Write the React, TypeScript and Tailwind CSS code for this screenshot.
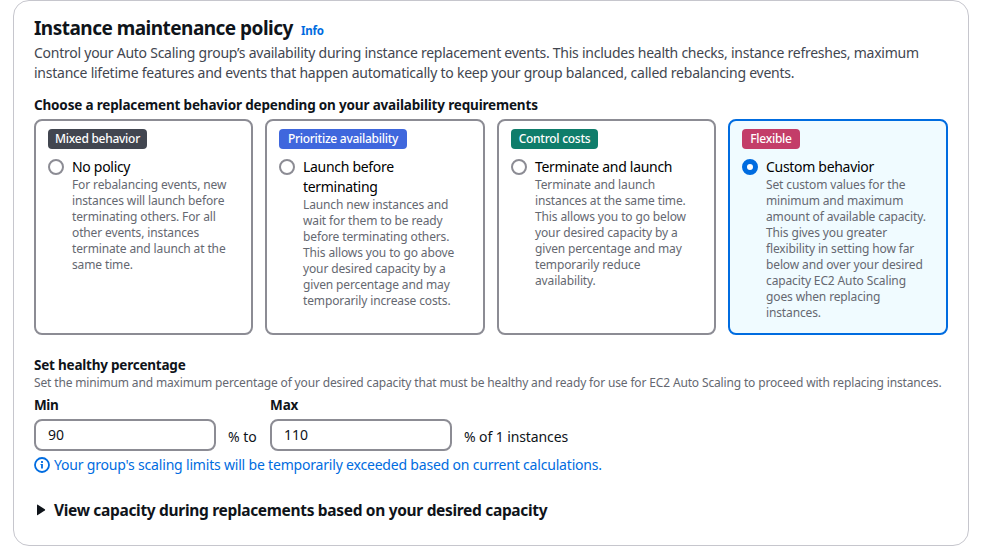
import React from "react";

type Choice = { tag: string; color: string; title: string[]; lines: string[]; width: string; selected?: boolean };

const choices: Choice[] = [
  { tag: "Mixed behavior", color: "w-[99px] bg-[#424650]", title: ["No policy"], width: "w-[219px]", lines: ["For rebalancing events, new", "instances will launch before", "terminating others. For all", "other events, instances", "terminate and launch at the", "same time."] },
  { tag: "Prioritize availability", color: "w-[128px] bg-[#3f67dd]", title: ["Launch before", "terminating"], width: "w-[220px]", lines: ["Launch new instances and", "wait for them to be ready", "before terminating others.", "This allows you to go above", "your desired capacity by a", "given percentage and may", "temporarily increase costs."] },
  { tag: "Control costs", color: "w-[87px] bg-[#0f7d6b]", title: ["Terminate and launch"], width: "w-[219px]", lines: ["Terminate and launch", "instances at the same time.", "This allows you to go below", "your desired capacity by a", "given percentage and may", "temporarily reduce", "availability."] },
  { tag: "Flexible", color: "w-[58px] bg-[#c33d69]", title: ["Custom behavior"], width: "w-[220px]", selected: true, lines: ["Set custom values for the", "minimum and maximum", "amount of available capacity.", "This gives you greater", "flexibility in setting how far", "below and over your desired", "capacity EC2 Auto Scaling", "goes when replacing", "instances."] },
];

function Card({ c }: { c: Choice }) {
  return (
    <div className={`h-[216px] shrink-0 rounded-lg border-2 px-3 py-2 ${c.width} ${c.selected ? "border-[#006ce0] bg-[#f0fbff]" : "border-[#8c8c94] bg-white"}`}>
      <div className={`h-5 whitespace-nowrap rounded-[4px] text-center text-[12px] font-medium leading-5 tracking-[-0.27px] text-white ${c.color}`}>{c.tag}</div>
      <div className="mt-2 flex gap-2">
        <div className={`mt-0.5 size-4 shrink-0 rounded-full bg-white ${c.selected ? "border-[5px] border-[#006ce0]" : "border-2 border-[#8c8c94]"}`} />
        <div>
          <div className="text-[14px] leading-5 tracking-[-0.3px] text-black">{c.title.map((t) => <div key={t} className="whitespace-nowrap">{t}</div>)}</div>
          <div className="text-[12px] leading-4 tracking-[-0.13px] text-[#656871]">{c.lines.map((t) => <div key={t} className="whitespace-nowrap">{t}</div>)}</div>
        </div>
      </div>
    </div>
  );
}

export default function App() {
  return (
    <div className="h-[550px] w-[988px] overflow-hidden bg-white font-['Noto_Sans',sans-serif] text-[14px] leading-5 text-[#0f141a]">
      <div className="ml-[13px] h-[546px] w-[956px] rounded-2xl border border-[#c6c6cd] px-5 pt-[15px]">
        <div className="flex h-[27px] items-baseline gap-2 leading-6">
          <h2 className="w-[259px] whitespace-nowrap text-[19px] font-bold tracking-[-0.52px]">Instance maintenance policy</h2>
          <span className="text-[11.5px] font-bold tracking-[-0.2px] text-[#006ce0]">Info</span>
        </div>
        <div className="whitespace-nowrap tracking-[-0.25px] text-[#424650]">
          <div>Control your Auto Scaling group’s availability during instance replacement events. This includes health checks, instance refreshes, maximum</div>
          <div className="tracking-[-0.24px]">instance lifetime features and events that happen automatically to keep your group balanced, called rebalancing events.</div>
        </div>
        <div className="mt-3 text-[13.5px] font-bold tracking-[-0.17px]">Choose a replacement behavior depending on your availability requirements</div>
        <div className="mt-1 flex gap-3">{choices.map((c) => <Card key={c.tag} c={c} />)}</div>
        <div className="mt-5 text-[13.5px] font-bold tracking-[-0.22px]">Set healthy percentage</div>
        <div className="whitespace-nowrap text-[12px] leading-4 tracking-[-0.15px] text-[#656871]">Set the minimum and maximum percentage of your desired capacity that must be healthy and ready for use for EC2 Auto Scaling to proceed with replacing instances.</div>
        <div className="mt-1 flex items-end">
          <div className="w-[182px]"><div className="text-[13.5px] font-bold tracking-[-0.4px]">Min</div><div className="mt-1 h-8 rounded-lg border-2 border-[#8c8c94] px-3 leading-7">90</div></div>
          <div className="ml-3 w-[42px] pb-1">% to</div>
          <div className="w-[182px]"><div className="text-[13.5px] font-bold tracking-[-0.1px]">Max</div><div className="mt-1 h-8 rounded-lg border-2 border-[#8c8c94] px-3 leading-7">110</div></div>
          <div className="ml-3 pb-1 tracking-[-0.1px]">% of 1 instances</div>
        </div>
        <div className="mt-1 flex items-center gap-1 text-[#006ce0]">
          <svg className="size-4" viewBox="0 0 16 16" fill="none" stroke="currentColor"><circle cx="8" cy="8" r="7" strokeWidth="1.8" /><path d="M8 11.5V7M8 6V4" strokeWidth="1.8" /><path d="M6.5 7.5H8" strokeWidth="1" /></svg>
          <span className="tracking-[-0.19px]">Your group's scaling limits will be temporarily exceeded based on current calculations.</span>
        </div>
        <div className="mt-[25px] flex h-5 items-center gap-1 text-[15.5px] font-bold">
          <svg className="size-4" viewBox="0 0 16 16" fill="currentColor"><path d="M3 3.2Q3 2.3 3.8 2.8L10.8 7.3Q11.5 8 10.8 8.6L3.8 13Q3 13.5 3 12.6Z" /></svg>
          <span className="tracking-[-0.32px]">View capacity during replacements based on your desired capacity</span>
        </div>
      </div>
    </div>
  );
}
